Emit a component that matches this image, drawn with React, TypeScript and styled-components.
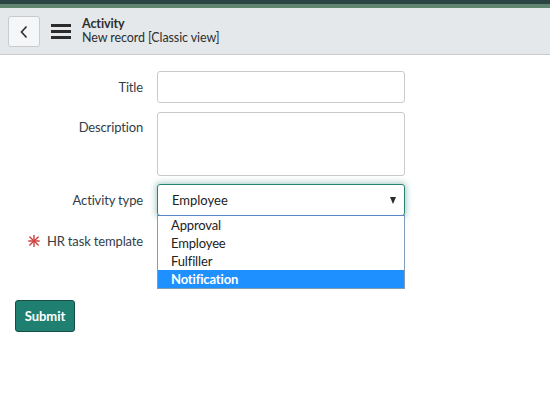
import React from 'react';
import styled, { createGlobalStyle } from 'styled-components';

const GlobalStyle = createGlobalStyle`
  body {
    margin: 0;
    font-family: Lato, "Liberation Sans", sans-serif;
    color: #343d47;
    background: #fff;
  }
`;

const TopStripe = styled.div`
  height: 4px;
  background: #2c4343;
  border-bottom: 4px solid #5f8571;
`;

const Header = styled.div`
  height: 47px;
  background: #e4e8eb;
  border-bottom: 1px solid #c8cacc;
  display: flex;
  align-items: center;
  padding-left: 8px;
  box-sizing: border-box;
`;

const BackButton = styled.button`
  width: 32px;
  height: 31px;
  margin-top: 1px;
  background: #f5f6f7;
  border: 1px solid #c8cacc;
  border-radius: 3px;
  display: flex;
  align-items: center;
  justify-content: center;
  padding: 0;
`;

const Burger = styled.div`
  width: 20px;
  margin-left: 11px;
  display: flex;
  flex-direction: column;
  gap: 3px;
  span {
    height: 3px;
    background: #2b2b2b;
  }
`;

const Titles = styled.div`
  margin-left: 11px;
  display: flex;
  flex-direction: column;
  font-size: 12.5px;
  line-height: 14px;
  color: #2e2e2e;
  letter-spacing: -0.1px;
`;

const Heading = styled.div`
  font-weight: 700;
`;

const Form = styled.div`
  padding-top: 16px;
`;

const Row = styled.div<{ top?: boolean; gap?: number }>`
  display: flex;
  align-items: ${p => (p.top ? 'flex-start' : 'center')};
  margin-bottom: ${p => (p.gap === undefined ? 9 : p.gap)}px;
`;

const Label = styled.label<{ padTop?: number }>`
  width: 143px;
  text-align: right;
  font-size: 13px;
  letter-spacing: -0.15px;
  padding-top: ${p => p.padTop || 0}px;
  display: flex;
  justify-content: flex-end;
  align-items: center;
  position: relative;
`;

const Required = styled.svg`
  position: absolute;
  left: 28px;
  top: 50%;
  margin-top: -6px;
`;

const Field = styled.div`
  margin-left: 14px;
  width: 248px;
  position: relative;
`;

const Input = styled.div<{ h: number }>`
  height: ${p => p.h}px;
  border: 1px solid #c8cacc;
  border-radius: 3px;
  box-sizing: border-box;
  background: #fff;
`;

const Spacer = styled.div`
  height: 32px;
`;

const Select = styled.div`
  height: 32px;
  border: 1px solid #278373;
  border-radius: 3px;
  box-sizing: border-box;
  box-shadow: 0 0 6px 1px rgba(39, 131, 115, 0.45);
  display: flex;
  align-items: center;
  justify-content: space-between;
  padding: 0 8px 0 14px;
  font-size: 13px;
  color: #222;
`;

const Arrow = styled.span`
  width: 0;
  height: 0;
  border-left: 3.5px solid transparent;
  border-right: 3.5px solid transparent;
  border-top: 7px solid #2b2b2b;
`;

const List = styled.ul`
  position: absolute;
  z-index: 2;
  top: 31px;
  left: 0;
  right: 0;
  margin: 0;
  padding: 0;
  list-style: none;
  background: #fff;
  border: 1px solid #7f9db9;
  border-top-color: #5b86c6;
`;

const Option = styled.li<{ active?: boolean }>`
  height: 18px;
  line-height: 18px;
  padding-left: 13px;
  font-size: 13px;
  letter-spacing: -0.15px;
  color: ${p => (p.active ? '#fff' : '#222')};
  background: ${p => (p.active ? '#1e90ff' : 'transparent')};
  font-weight: ${p => (p.active ? 700 : 400)};
`;

const Submit = styled.button`
  margin: 34px 0 0 15px;
  width: 60px;
  height: 32px;
  background: #1f8071;
  border: 1px solid #144e45;
  border-radius: 3px;
  color: #fff;
  font-family: Lato, "Liberation Sans", sans-serif;
  font-weight: 700;
  font-size: 13px;
  padding: 0;
`;

const options = ['Approval', 'Employee', 'Fulfiller', 'Notification'];

export default function App() {
  return (
    <>
      <GlobalStyle />
      <TopStripe />
      <Header>
        <BackButton>
          <svg width="10" height="16" viewBox="0 0 10 16">
            <path d="M7.5 2.5 L2.5 8 L7.5 13.5" fill="none" stroke="#2b2b2b" strokeWidth="1.6" />
          </svg>
        </BackButton>
        <Burger>
          <span />
          <span />
          <span />
        </Burger>
        <Titles>
          <Heading>Activity</Heading>
          <div>New record [Classic view]</div>
        </Titles>
      </Header>
      <Form>
        <Row>
          <Label>Title</Label>
          <Field>
            <Input h={32} />
          </Field>
        </Row>
        <Row top gap={8}>
          <Label padTop={7}>Description</Label>
          <Field>
            <Input h={64} />
          </Field>
        </Row>
        <Row>
          <Label>Activity type</Label>
          <Field>
            <Select>
              Employee
              <Arrow />
            </Select>
            <List>
              {options.map(o => (
                <Option key={o} active={o === 'Notification'}>
                  {o}
                </Option>
              ))}
            </List>
          </Field>
        </Row>
        <Row>
          <Label>
            <Required width="12" height="12" viewBox="0 0 12 12">
              <g stroke="#d23f3f" strokeWidth="1.4" strokeLinecap="round">
                <line x1="6" y1="0.5" x2="6" y2="11.5" />
                <line x1="0.8" y1="6" x2="11.2" y2="6" />
                <line x1="1.8" y1="2" x2="10.2" y2="10" />
                <line x1="10.2" y1="2" x2="1.8" y2="10" />
              </g>
            </Required>
            HR task template
          </Label>
          <Field>
            <Spacer />
          </Field>
        </Row>
        <Submit>Submit</Submit>
      </Form>
    </>
  );
}
